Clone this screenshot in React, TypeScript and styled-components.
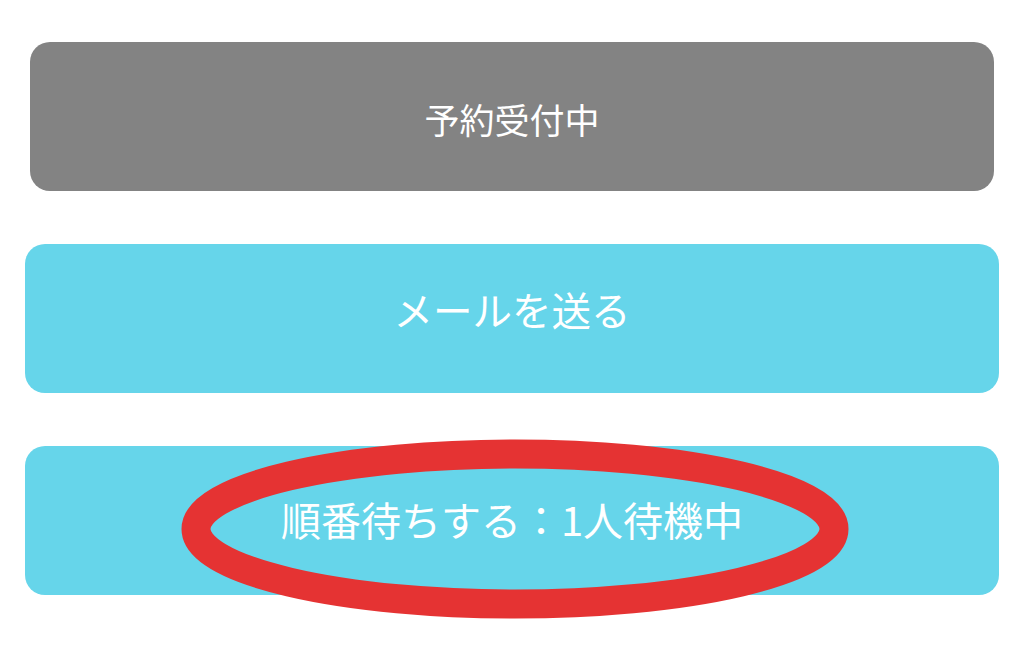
import React, {FC} from 'react';
import styled, {createGlobalStyle} from 'styled-components';

const GlobalStyle = createGlobalStyle`
  html, body {
    margin: 0;
    padding: 0;
    background: #ffffff;
  }
  body {
    font-family: "Noto Sans CJK JP", "Noto Sans", sans-serif;
  }
`;

const Page = styled.div`
  position: relative;
  width: 1024px;
  height: 657px;
  padding-top: 42px;
  box-sizing: border-box;
  display: flex;
  flex-direction: column;
  align-items: center;
  gap: 53px;
  overflow: hidden;
`;

// $lift moves the label up (positive) or down (negative) inside the button
const ActionButton = styled.button<{ $tone: 'closed' | 'open'; $wide?: boolean; $size: number; $lift?: number }>`
  display: flex;
  align-items: center;
  justify-content: center;
  width: ${(p) => (p.$wide ? 974 : 964)}px;
  height: 149px;
  margin: 0;
  padding: ${(p) => (p.$lift && p.$lift < 0 ? -p.$lift * 2 : 0)}px 0
    ${(p) => (p.$lift && p.$lift > 0 ? p.$lift * 2 : 0)}px;
  box-sizing: border-box;
  border: none;
  border-radius: 20px;
  background: ${(p) => (p.$tone === 'closed' ? '#838383' : '#66d5ea')};
  color: #ffffff;
  font-family: "Noto Sans CJK JP", "Noto Sans", sans-serif;
  font-size: ${(p) => p.$size}px;
  font-weight: 400;
  letter-spacing: 0;
  cursor: pointer;
`;

const Highlight = styled.svg`
  position: absolute;
  left: 0;
  top: 0;
  pointer-events: none;
`;

const App: FC = () => {
  return (
    <>
      <GlobalStyle />
      <Page>
        <ActionButton $tone="closed" $size={35} $lift={-2}>予約受付中</ActionButton>
        <ActionButton $tone="open" $wide $size={39.5} $lift={10}>メールを送る</ActionButton>
        <ActionButton $tone="open" $wide $size={40} $lift={2}>順番待ちする：1人待機中</ActionButton>
        <Highlight width="1024" height="657" viewBox="0 0 1024 657">
          <ellipse cx="515" cy="529" rx="319" ry="75" fill="none" stroke="#e53333" strokeWidth="29" />
        </Highlight>
      </Page>
    </>
  );
};

export default App;
